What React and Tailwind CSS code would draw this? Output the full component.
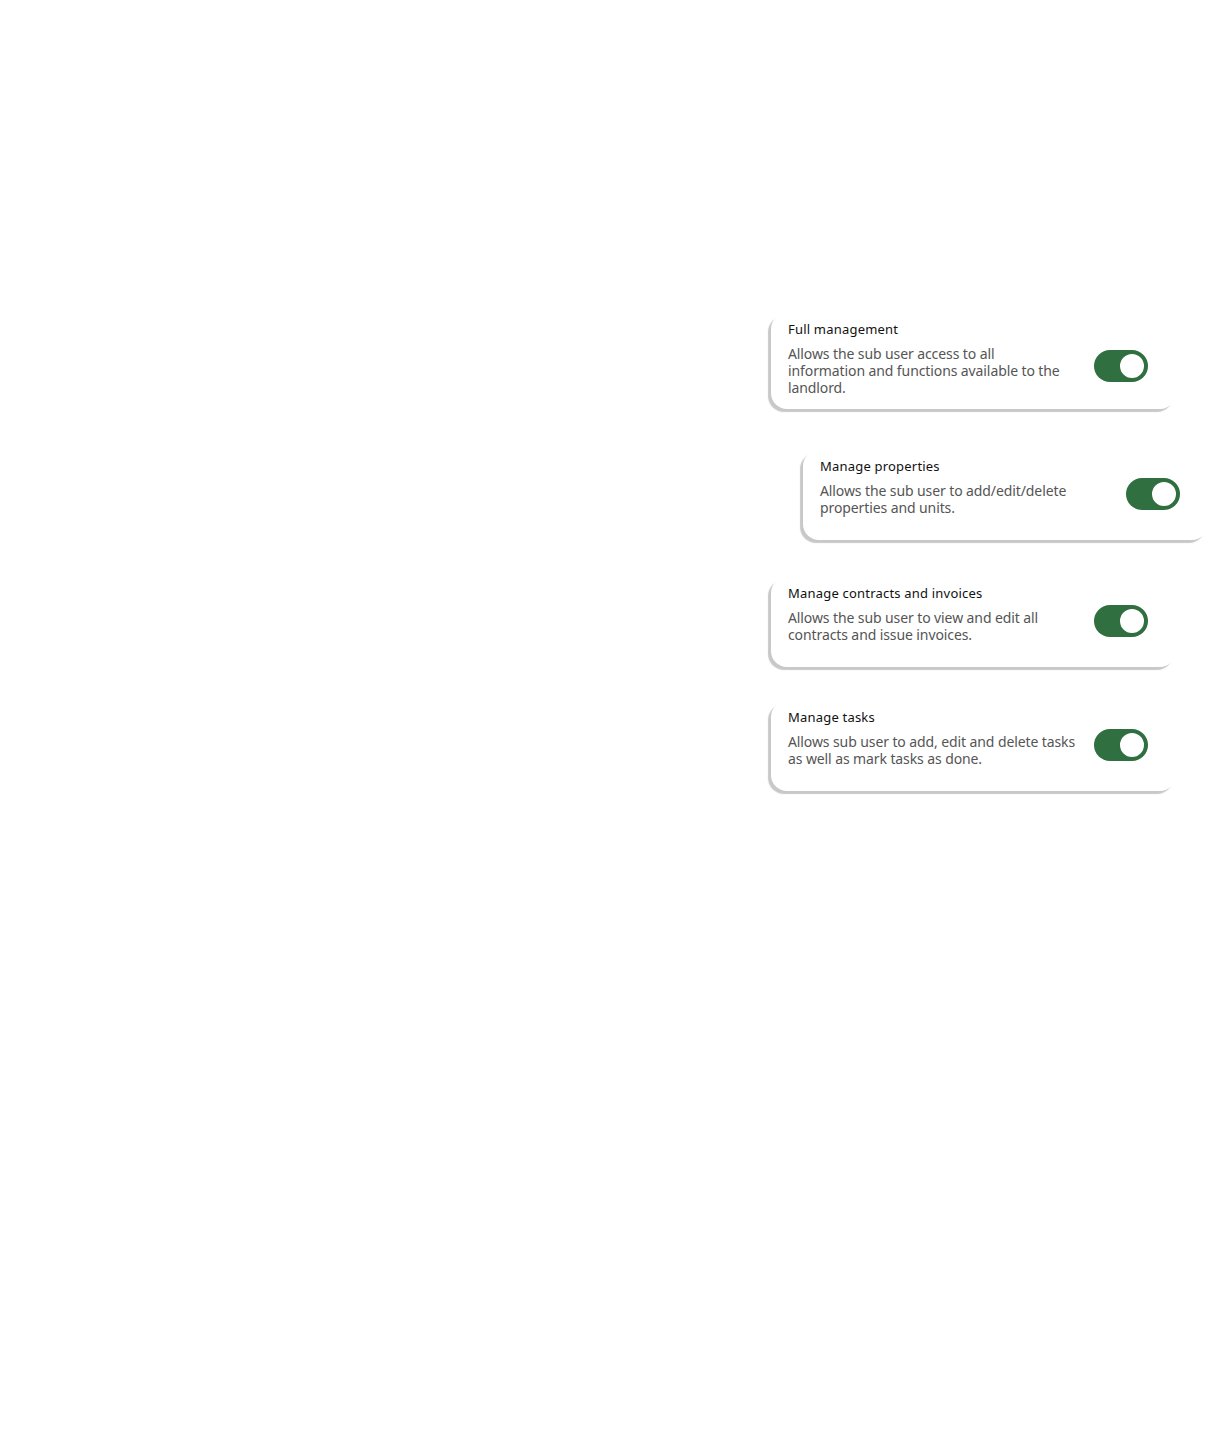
import React, { useState } from 'react';

// descriptions are kept as explicit lines so the wrap stays fixed
const PERMISSIONS = [
  {
    id: 'full',
    title: 'Full management',
    lines: ['Allows the sub user access to all', 'information and functions available to the', 'landlord.'],
    indent: false,
    gap: 'mt-0',
  },
  {
    id: 'properties',
    title: 'Manage properties',
    lines: ['Allows the sub user to add/edit/delete', 'properties and units.'],
    indent: true,
    gap: 'mt-[41px]',
  },
  {
    id: 'contracts',
    title: 'Manage contracts and invoices',
    lines: ['Allows the sub user to view and edit all', 'contracts and issue invoices.'],
    indent: false,
    gap: 'mt-[37px]',
  },
  {
    id: 'tasks',
    title: 'Manage tasks',
    lines: ['Allows sub user to add, edit and delete tasks', 'as well as mark tasks as done.'],
    indent: false,
    gap: 'mt-[34px]',
  },
];

// --- COMPONENT: TOGGLE SWITCH ---
const Toggle = ({ on, onChange }) => (
  <button
    onClick={onChange}
    className={`flex h-[32px] w-[54px] shrink-0 -translate-y-[5px] items-center rounded-full p-[2px] transition-colors ${
      on ? 'justify-end bg-[#2f6f40]' : 'justify-start bg-[#c9c9c9]'
    }`}
  >
    <span
      className={`block h-[28px] w-[28px] rounded-full border-2 bg-white ${
        on ? 'border-[#2f6f40]' : 'border-[#c9c9c9]'
      }`}
    />
  </button>
);

// --- COMPONENT: PERMISSION CARD ---
const PermissionCard = ({ item, on, onToggle }) => (
  <div
    className={`${item.gap} ${item.indent ? 'ml-8' : ''} w-[405px] min-h-[90px] rounded-2xl bg-white pl-[17px] pr-[28px] pt-[8px] pb-[13px] shadow-[-3px_3px_1px_#c8c8c8]`}
  >
    <div className="text-[13px] leading-[16px] tracking-[0.2px] text-[#111]">{item.title}</div>
    <div className="mt-[8px] flex items-center justify-between">
      <p className="w-[292px] whitespace-nowrap text-[14px] leading-[17px] tracking-[-0.1px] text-[#555]">
        {item.lines.map((line, i) => (
          <span key={i} className="block">{line}</span>
        ))}
      </p>
      <Toggle on={on} onChange={onToggle} />
    </div>
  </div>
);

export default function App() {
  const [enabled, setEnabled] = useState({
    full: true,
    properties: true,
    contracts: true,
    tasks: true,
  });

  return (
    <div
      className="min-h-[1446px] w-full bg-white pt-[313px] pl-[771px]"
      style={{ fontFamily: '"Noto Sans", sans-serif' }}
    >
      <div className="flex flex-col items-start">
        {PERMISSIONS.map((item) => (
          <PermissionCard
            key={item.id}
            item={item}
            on={enabled[item.id]}
            onToggle={() => setEnabled((prev) => ({ ...prev, [item.id]: !prev[item.id] }))}
          />
        ))}
      </div>
    </div>
  );
}
